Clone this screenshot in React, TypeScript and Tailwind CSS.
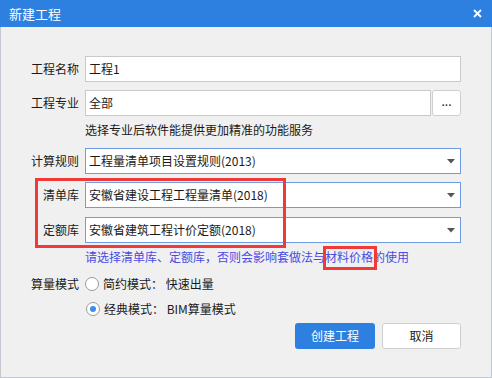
const font = { fontFamily: '"Noto Sans CJK SC", "Microsoft YaHei", sans-serif' };

function Caret() {
  return (
    <svg width="8" height="5" viewBox="0 0 8 5" className="shrink-0">
      <path d="M0 0h8L4 4.5z" fill="#555" />
    </svg>
  );
}

function Select({ value }: { value: string }) {
  return (
    <div className="flex h-[26px] w-[376px] items-center justify-between border border-[#6f9be3] bg-white pl-[3px] pr-[5px] text-[12px] text-[#1a1a1a]">
      <span>{value}</span>
      <Caret />
    </div>
  );
}

function Row({ label, children, className = '' }: { label: string; children: React.ReactNode; className?: string }) {
  return (
    <div className={`flex items-center ${className}`}>
      <div className="w-[78px] text-right text-[12px] text-[#1a1a1a]">{label}</div>
      <div className="ml-[6px]">{children}</div>
    </div>
  );
}

function Radio({ checked, label }: { checked?: boolean; label: string }) {
  return (
    <div className="flex items-center">
      <div className="flex h-[14px] w-[14px] items-center justify-center rounded-full border border-[#9a9a9a] bg-white">
        {checked && <div className="h-[6px] w-[6px] rounded-full bg-[#3b8ef0]" />}
      </div>
      <span className="ml-[4px] text-[12px] text-[#1a1a1a]">{label}</span>
    </div>
  );
}

export default function App() {
  return (
    <div className="flex h-[378px] w-[492px] flex-col" style={font}>
      <div className="flex h-[27px] shrink-0 items-center justify-between bg-[#2d80e0] pl-[9px] pr-[10px]">
        <span className="text-[13px] text-white">新建工程</span>
        <svg width="9" height="9" viewBox="0 0 9 9">
          <path d="M1 1l7 7M8 1L1 8" stroke="#fff" strokeWidth="1.8" />
        </svg>
      </div>

      <div className="relative flex flex-1 flex-col border-x border-b border-[#c3c7cf] bg-[#f0f0f0] pt-[29px]">
        <Row label="工程名称">
          <div className="flex h-[26px] w-[376px] items-center border border-[#c9c9c9] bg-white pl-[3px] text-[12px] text-[#1a1a1a]">
            工程1
          </div>
        </Row>

        <Row label="工程专业" className="mt-[8px]">
          <div className="flex">
            <div className="flex h-[26px] w-[346px] items-center border border-[#c9c9c9] bg-white pl-[3px] text-[12px] text-[#1a1a1a]">
              全部
            </div>
            <div className="ml-[1px] flex h-[26px] w-[29px] items-center justify-center rounded-[3px] border border-[#cfcfcf] bg-white pb-[4px] text-[12px] text-[#1a1a1a]">
              ...
            </div>
          </div>
        </Row>

        <div className="mt-[6px] ml-[84px] h-[16px] text-[12px] leading-[16px] text-[#1a1a1a]">
          选择专业后软件能提供更加精准的功能服务
        </div>

        <Row label="计算规则" className="mt-[10px]">
          <Select value="工程量清单项目设置规则(2013)" />
        </Row>
        <Row label="清单库" className="mt-[8px]">
          <Select value="安徽省建设工程工程量清单(2018)" />
        </Row>
        <Row label="定额库" className="mt-[9px]">
          <Select value="安徽省建筑工程计价定额(2018)" />
        </Row>

        <div className="mt-[6px] ml-[84px] h-[16px] text-[12px] leading-[16px] text-[#4b4be3]">
          请选择清单库、定额库，否则会影响套做法与材料价格的使用
        </div>

        <Row label="算量模式" className="mt-[10px]">
          <Radio label="简约模式： 快速出量" />
        </Row>
        <div className="mt-[7px] ml-[85px]">
          <Radio checked label="经典模式： BIM算量模式" />
        </div>

        <div className="mt-[5px] flex justify-end gap-[7px] pr-[30px]">
          <div className="flex h-[26px] w-[80px] items-center justify-center rounded-[3px] bg-[#2d80e0] text-[12px] text-white">
            创建工程
          </div>
          <div className="flex h-[26px] w-[79px] items-center justify-center rounded-[3px] border border-[#cfcfcf] bg-white text-[12px] text-[#1a1a1a]">
            取消
          </div>
        </div>

        <div className="absolute left-[34px] top-[151px] h-[70px] w-[251px] border-[3px] border-[#f03a3a]" />
        <div className="absolute left-[322px] top-[219px] h-[24px] w-[54px] border-[3px] border-[#f03a3a]" />
      </div>
    </div>
  );
}
